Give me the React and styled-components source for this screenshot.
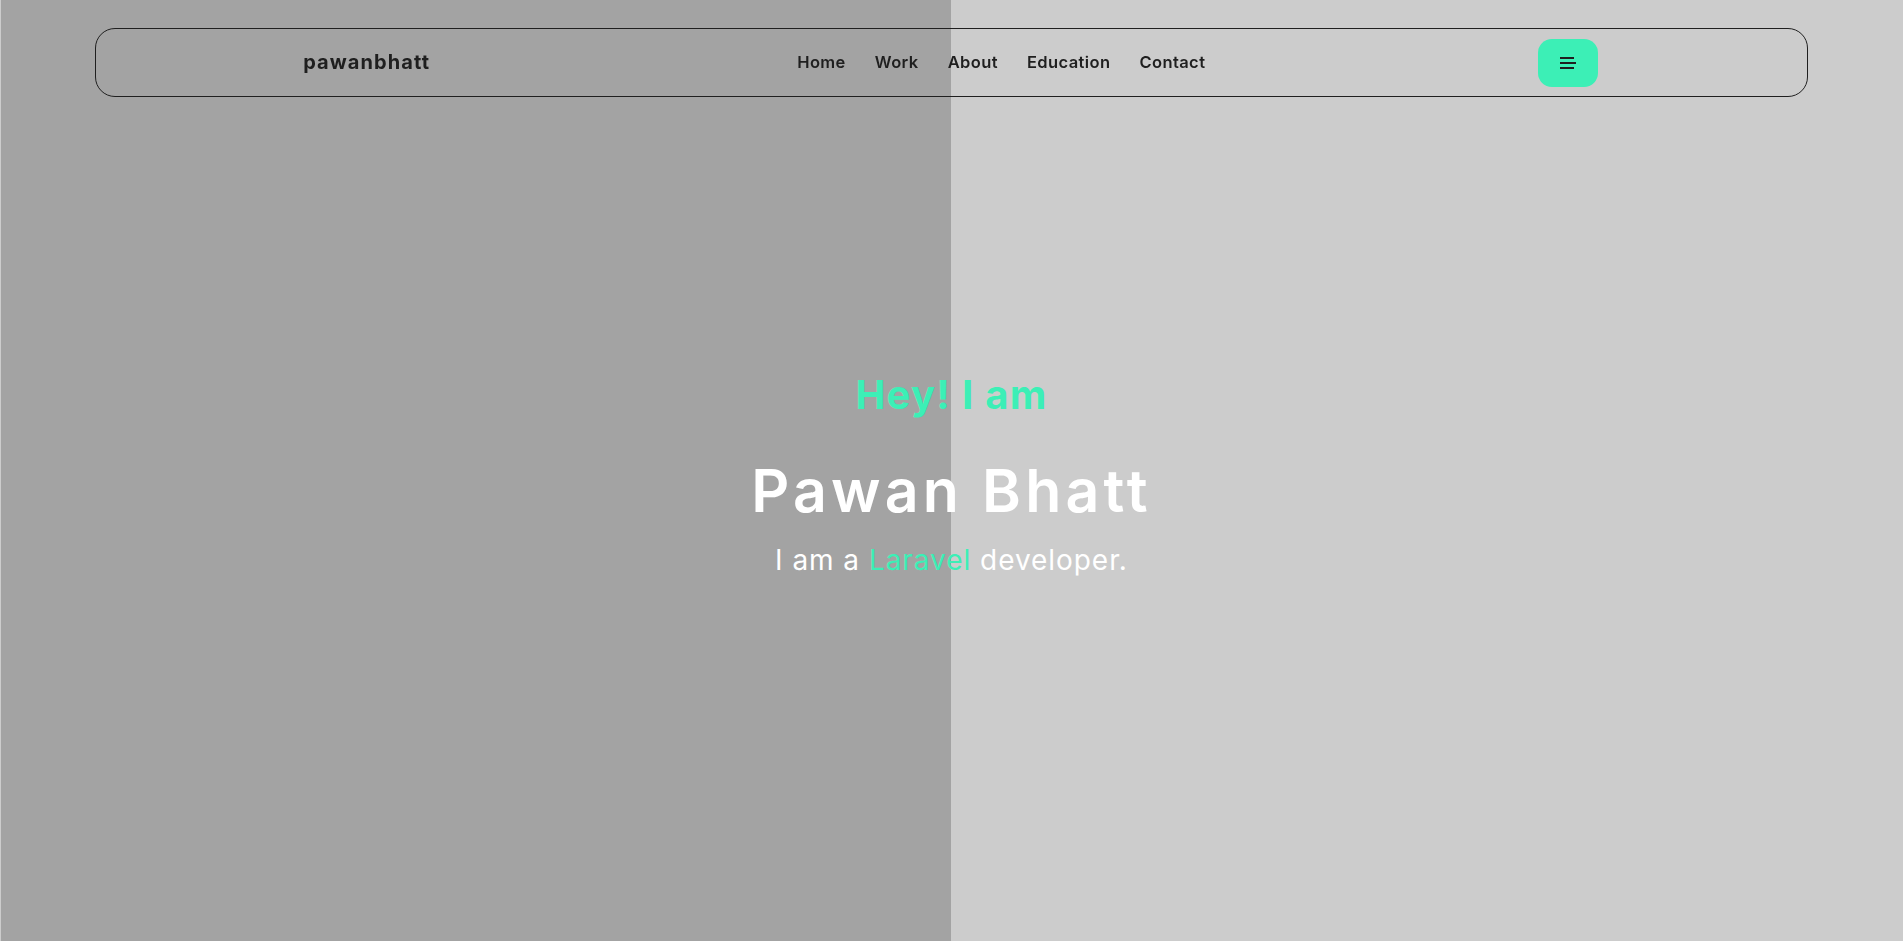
import React from "react";
import styled, { createGlobalStyle } from "styled-components";

const GlobalStyle = createGlobalStyle`
  *, *::before, *::after { box-sizing: border-box; }
  html, body { margin: 0; padding: 0; }
  body {
    font-family: "Inter", "Liberation Sans", sans-serif;
    background: #cccccc;
    overflow: hidden;
  }
`;

const ACCENT = "#3cefb6";
const INK = "#1f1f1f";

const Page = styled.div`
  min-height: 100vh;
  background: linear-gradient(
    to right,
    #cccccc 0 1px,
    #a3a3a3 1px 50%,
    #cccccc 50% 100%
  );
`;

const Header = styled.header`
  position: fixed;
  top: 28px;
  left: 0;
  right: 0;
  display: flex;
  justify-content: center;
  z-index: 10;
`;

const NavBar = styled.nav`
  width: 90%;
  height: 69px;
  border: 1px solid ${INK};
  border-radius: 20px;
  display: flex;
  align-items: center;
  padding: 0 207px;
`;

const Logo = styled.a`
  font-size: 20px;
  font-weight: 700;
  color: ${INK};
  text-decoration: none;
  letter-spacing: 1.1px;
  margin-top: -2px;
`;

const Links = styled.ul`
  list-style: none;
  margin: -1px 0 0 367px;
  padding: 0;
  display: flex;
  gap: 29px;
`;

const LinkItem = styled.li`
  font-size: 16.5px;
  font-weight: 600;
  color: ${INK};
  letter-spacing: 0.4px;
`;

const MenuButton = styled.button`
  margin-left: auto;
  margin-right: 2px;
  width: 60px;
  height: 48px;
  border: none;
  border-radius: 14px;
  background: ${ACCENT};
  display: flex;
  align-items: center;
  justify-content: center;
  padding: 0;
  margin-top: 1px;
  cursor: pointer;
`;

const Hero = styled.main`
  min-height: 100vh;
  display: flex;
  flex-direction: column;
  align-items: center;
  justify-content: center;
  text-align: center;
  padding-top: 9px;
`;

const Greeting = styled.h3`
  margin: 0;
  font-size: 40px;
  font-weight: 700;
  color: ${ACCENT};
  letter-spacing: 1.3px;
  line-height: 1.2;
`;

const Name = styled.h1`
  margin: 37px 0 0;
  font-size: 59px;
  font-weight: 600;
  color: #ffffff;
  letter-spacing: 4.2px;
  line-height: 1.2;
`;

const Tagline = styled.p`
  margin: 15px 0 0;
  font-size: 28px;
  font-weight: 400;
  color: #ffffff;
  letter-spacing: 0.95px;
  line-height: 1.3;
`;

const Highlight = styled.span`
  color: ${ACCENT};
`;

function MenuIcon() {
  return (
    <svg width="16" height="14" viewBox="0 0 16 14" aria-hidden="true">
      <rect x="0" y="1" width="14" height="2" fill={INK} />
      <rect x="0" y="6" width="16" height="2" fill={INK} />
      <rect x="0" y="11" width="14" height="2" fill={INK} />
    </svg>
  );
}

export default function App() {
  const links = ["Home", "Work", "About", "Education", "Contact"];
  return (
    <>
      <GlobalStyle />
      <Page>
        <Header>
          <NavBar>
            <Logo href="#">pawanbhatt</Logo>
            <Links>
              {links.map((l) => (
                <LinkItem key={l}>{l}</LinkItem>
              ))}
            </Links>
            <MenuButton aria-label="menu">
              <MenuIcon />
            </MenuButton>
          </NavBar>
        </Header>
        <Hero>
          <Greeting>Hey! I am</Greeting>
          <Name>Pawan Bhatt</Name>
          <Tagline>
            I am a <Highlight>Laravel</Highlight> developer.
          </Tagline>
        </Hero>
      </Page>
    </>
  );
}
